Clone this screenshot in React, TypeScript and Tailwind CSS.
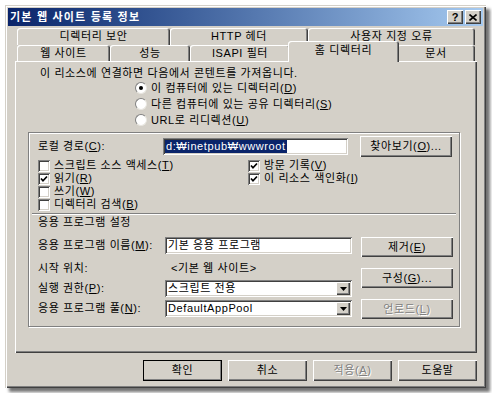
import type { ReactNode } from 'react';

const raised = 'shadow-[inset_1px_1px_#ffffff,inset_-1px_-1px_#404040,inset_-2px_-2px_#808080]';
const sunken = 'shadow-[inset_1px_1px_#808080,inset_-1px_-1px_#ffffff,inset_2px_2px_#404040,inset_-2px_-2px_#d4d0c8]';
const disabledText = 'text-[#808080] [text-shadow:1px_1px_0_#ffffff]';

function Btn({ children, w = 'w-[92px]', h = 'h-[20px]', disabled = false, primary = false }: { children: ReactNode; w?: string; h?: string; disabled?: boolean; primary?: boolean }) {
  return (
    <div
      className={`${w} ${h} shrink-0 bg-[#d4d0c8] flex items-center justify-center ${raised} ${primary ? 'outline outline-1 outline-black -outline-offset-1' : ''} ${disabled ? disabledText : ''}`}
    >
      {children}
    </div>
  );
}

function Check({ checked = false, children }: { checked?: boolean; children: ReactNode }) {
  return (
    <div className="flex items-center h-[13px]">
      <span className={`w-[12px] h-[12px] shrink-0 bg-white ${sunken} flex items-center justify-center`}>
        {checked && (
          <svg width="8" height="8" viewBox="0 0 8 8">
            <path d="M1 3.5 L3 5.8 L7 1.5" stroke="black" strokeWidth="1.7" fill="none" />
          </svg>
        )}
      </span>
      <span className="ml-[4px]">{children}</span>
    </div>
  );
}

function Radio({ checked = false, children }: { checked?: boolean; children: ReactNode }) {
  return (
    <div className="flex items-center h-[16px]">
      <span className="w-[12px] h-[12px] shrink-0 rounded-full bg-white border border-t-[#808080] border-l-[#808080] border-r-[#e8e6e0] border-b-[#e8e6e0] flex items-center justify-center">
        {checked && <span className="w-[4px] h-[4px] rounded-full bg-black" />}
      </span>
      <span className="ml-[4px]">{children}</span>
    </div>
  );
}

function Select({ value }: { value: string }) {
  return (
    <div className={`w-[187px] h-[17px] bg-white ${sunken} flex items-center pl-[3px] pr-[2px]`}>
      <span className="flex-1">{value}</span>
      <span className={`w-[14px] h-[13px] bg-[#d4d0c8] ${raised} flex items-center justify-center`}>
        <svg width="7" height="4" viewBox="0 0 7 4">
          <path d="M0 0h7L3.5 4z" fill="black" />
        </svg>
      </span>
    </div>
  );
}

const tabBase = 'h-full flex items-center justify-center bg-[#d4d0c8] rounded-t-[3px] shadow-[inset_1px_1px_#ffffff,inset_-1px_0_#404040,inset_-2px_0_#808080]';

export default function App() {
  return (
    <div className="w-[492px] h-[393px] bg-white pt-[5px] pl-[5px] text-[11px] leading-[13px] tracking-[0.6px] text-black font-['Liberation_Sans','Noto_Sans_CJK_KR',sans-serif]">
      <div className="w-[481px] h-[383px] bg-[#d4d0c8] p-[3px] flex flex-col shadow-[inset_1px_1px_#d4d0c8,inset_2px_2px_#ffffff,inset_-1px_-1px_#404040,inset_-2px_-2px_#808080,4px_4px_3px_rgba(0,0,0,0.55)]">
        {/* Title bar */}
        <div className="h-[18px] flex items-center justify-between pl-[2px] pr-[2px] bg-linear-to-r from-[#0a246a] to-[#a6caf0]">
          <span className="text-white font-bold tracking-[1.2px]">기본 웹 사이트 등록 정보</span>
          <div className="flex gap-[2px] tracking-normal">
            <span className={`w-[16px] h-[14px] bg-[#d4d0c8] ${raised} flex items-center justify-center font-bold text-[11px]`}>?</span>
            <span className={`w-[16px] h-[14px] bg-[#d4d0c8] ${raised} flex items-center justify-center`}>
              <svg width="8" height="7" viewBox="0 0 8 7">
                <path d="M0.5 0.5 L7.5 6.5 M7.5 0.5 L0.5 6.5" stroke="black" strokeWidth="1.6" />
              </svg>
            </span>
          </div>
        </div>

        <div className="pl-[7px] pr-[6px] mt-[2px] flex flex-col">
          {/* Tabs */}
          <div className="ml-[2px] flex h-[17px]">
            <div className={`${tabBase} w-[153px]`}>디렉터리 보안</div>
            <div className={`${tabBase} w-[138px]`}>HTTP 헤더</div>
            <div className={`${tabBase} w-[167px]`}>사용자 지정 오류</div>
          </div>
          <div className="ml-[2px] flex h-[16px] items-end">
            <div className={`${tabBase} w-[93px]`}>웹 사이트</div>
            <div className={`${tabBase} w-[80px]`}>성능</div>
            <div className={`${tabBase} w-[100px]`}>ISAPI 필터</div>
            <div className="relative z-10 w-[111px] h-[21px] -mx-[2px] -mb-[1px] flex items-start justify-center pt-[3px] bg-[#d4d0c8] rounded-t-[3px] shadow-[inset_1px_1px_#ffffff,inset_-1px_0_#404040,inset_-2px_0_#808080]">
              홈 디렉터리
            </div>
            <div className={`${tabBase} w-[78px]`}>문서</div>
          </div>

          {/* Panel */}
          <div className={`h-[292px] flex flex-col pl-[13px] ${raised}`}>
            <div className="pl-[12px] mt-[5px] h-[14px] leading-[14px]">이 리소스에 연결하면 다음에서 콘텐트를 가져옵니다.</div>
            <div className="pl-[107px] flex flex-col">
              <Radio checked>이 컴퓨터에 있는 디렉터리(<u>D</u>)</Radio>
              <Radio>다른 컴퓨터에 있는 공유 디렉터리(<u>S</u>)</Radio>
              <Radio>URL로 리디렉션(<u>U</u>)</Radio>
            </div>

            {/* Frame */}
            <div className="mt-[4px] w-[432px] h-[195px] border border-[#808080] shadow-[inset_1px_1px_#ffffff,1px_1px_#ffffff] flex flex-col">
              <div className="mt-[3px] h-[21px] flex items-center pl-[9px]">
                <span className="w-[125px]">로컬 경로(<u>C</u>):</span>
                <div className={`w-[185px] h-[17px] bg-white ${sunken} flex items-center pl-[2px]`}>
                  <span className="bg-[#0a246a] text-white px-[1px]">d:₩inetpub₩wwwroot</span>
                </div>
                <div className="ml-[12px]">
                  <Btn h="h-[21px]">찾아보기(<u>O</u>)...</Btn>
                </div>
              </div>

              <div className="mt-[2px] flex pl-[9px]">
                <div className="w-[210px] flex flex-col">
                  <Check>스크립트 소스 액세스(<u>T</u>)</Check>
                  <Check checked>읽기(<u>R</u>)</Check>
                  <Check>쓰기(<u>W</u>)</Check>
                  <Check>디렉터리 검색(<u>B</u>)</Check>
                </div>
                <div className="flex flex-col">
                  <Check checked>방문 기록(<u>V</u>)</Check>
                  <Check checked>이 리소스 색인화(<u>I</u>)</Check>
                </div>
              </div>

              <div className="mt-[2px] mx-[3px] border-t border-[#808080] border-b border-b-white" />
              <div className="h-[14px] leading-[14px] pl-[9px]">응용 프로그램 설정</div>

              <div className="flex pl-[9px]">
                <div className="w-[314px] flex flex-col pt-[8px]">
                  <div className="h-[17px] flex items-center">
                    <span className="w-[127px]">응용 프로그램 이름(<u>M</u>):</span>
                    <div className={`w-[187px] h-[17px] bg-white ${sunken} flex items-center pl-[3px]`}>기본 응용 프로그램</div>
                  </div>
                  <div className="mt-[6px] h-[17px] flex items-center">
                    <span className="w-[133px]">시작 위치:</span>
                    <span>&lt;기본 웹 사이트&gt;</span>
                  </div>
                  <div className="mt-[3px] h-[17px] flex items-center">
                    <span className="w-[127px]">실행 권한(<u>P</u>):</span>
                    <Select value="스크립트 전용" />
                  </div>
                  <div className="mt-[3px] h-[17px] flex items-center">
                    <span className="w-[127px]">응용 프로그램 풀(<u>N</u>):</span>
                    <Select value="DefaultAppPool" />
                  </div>
                </div>
                <div className="ml-[9px] flex flex-col pt-[8px] gap-[11px]">
                  <Btn>제거(<u>E</u>)</Btn>
                  <Btn>구성(<u>G</u>)...</Btn>
                  <Btn disabled>언로드(<u>L</u>)</Btn>
                </div>
              </div>
            </div>
          </div>

          {/* Bottom buttons */}
          <div className="mt-[7px] flex justify-end gap-[6px]">
            <Btn w="w-[79px]" h="h-[21px]" primary>확인</Btn>
            <Btn w="w-[79px]" h="h-[21px]">취소</Btn>
            <Btn w="w-[79px]" h="h-[21px]" disabled>적용(<u>A</u>)</Btn>
            <Btn w="w-[79px]" h="h-[21px]">도움말</Btn>
          </div>
        </div>
      </div>
    </div>
  );
}
